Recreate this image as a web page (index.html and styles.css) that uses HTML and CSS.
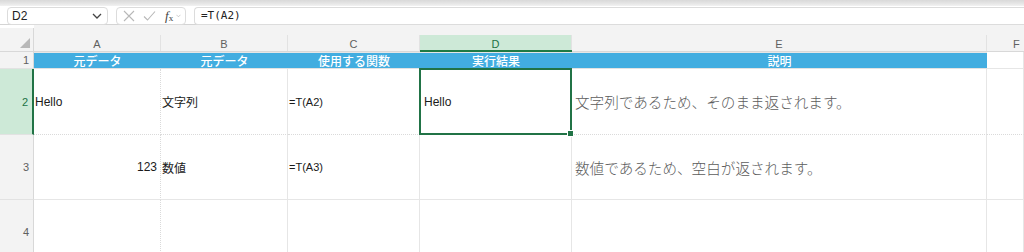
FILE: index.html
```html
<!DOCTYPE html>
<html lang="ja">
<head>
<meta charset="utf-8">
<link rel="stylesheet" href="styles.css">
</head>
<body>
<div class="app">
  <div class="topstrip"></div>
  <div class="formula-row">
    <div class="namebox">
      <span class="nb-text">D2</span>
      <svg class="chev" width="10" height="6" viewBox="0 0 10 6"><path d="M1 1 L5 5 L9 1" fill="none" stroke="#444" stroke-width="1.3"/></svg>
    </div>
    <div class="fxbox">
      <svg class="ic" width="12" height="12" viewBox="0 0 12 12"><path d="M1 1 L11 11 M11 1 L1 11" stroke="#b8b8b8" stroke-width="1.1" fill="none"/></svg>
      <svg class="ic" width="13" height="12" viewBox="0 0 13 12"><path d="M1 6.5 L4.5 10 L12 1.5" stroke="#b8b8b8" stroke-width="1.1" fill="none"/></svg>
      <span class="fx"><i>f</i><sub>x</sub></span>
      <svg class="chev-s" width="6" height="4" viewBox="0 0 6 4"><path d="M0.5 0.5 L3 3 L5.5 0.5" fill="none" stroke="#bbb" stroke-width="0.9"/></svg>
    </div>
    <div class="formula">=T(A2)</div>
  </div>
  <div class="sheet">
    <div class="corner"><span class="tri"></span></div>
    <div class="colh"><span>A</span></div>
    <div class="colh"><span>B</span></div>
    <div class="colh"><span>C</span></div>
    <div class="colh sel"><span>D</span></div>
    <div class="colh"><span>E</span></div>
    <div class="colh last"><span>F</span></div>

    <div class="rowh">1</div>
    <div class="hd">元データ</div>
    <div class="hd">元データ</div>
    <div class="hd">使用する関数</div>
    <div class="hd">実行結果</div>
    <div class="hd">説明</div>
    <div class="c blank"></div>

    <div class="rowh rsel">2</div>
    <div class="c dot vdot">Hello</div>
    <div class="c dot jp">文字列</div>
    <div class="c dot f">=T(A2)</div>
    <div class="c dot active">Hello</div>
    <div class="c dot desc">文字列であるため、そのまま返されます。</div>
    <div class="c dot"></div>

    <div class="rowh">3</div>
    <div class="c num vdot">123</div>
    <div class="c jp">数値</div>
    <div class="c f">=T(A3)</div>
    <div class="c"></div>
    <div class="c desc">数値であるため、空白が返されます。</div>
    <div class="c"></div>

    <div class="rowh">4</div>
    <div class="c vdot"></div>
    <div class="c"></div>
    <div class="c"></div>
    <div class="c"></div>
    <div class="c"></div>
    <div class="c"></div>
  </div>
</div>
</body>
</html>
```

FILE: styles.css
```css
* { box-sizing: border-box; }
html, body { margin: 0; padding: 0; background: #fff; }
body {
  font-family: "Liberation Sans", "Noto Sans CJK JP", sans-serif;
  width: 1024px;
  height: 252px;
  overflow: hidden;
}
.app { display: flex; flex-direction: column; }
.topstrip {
  height: 6px;
  background: linear-gradient(#d9d9d9, #e6e6e6 60%, #f2f2f2);
}
.formula-row {
  height: 19px;
  display: flex;
  align-items: flex-start;
  gap: 8px;
  padding: 1px 0 0 7px;
  border-bottom: 1px solid #d4d4d4;
  background: #fff;
}
.namebox {
  width: 101px;
  height: 18px;
  border: 1px solid #dcdcdc;
  border-radius: 4px;
  display: flex;
  align-items: center;
  justify-content: space-between;
  padding: 0 5px 0 4px;
  font-size: 12px;
  color: #222;
}
.fxbox {
  width: 70px;
  height: 18px;
  border: 1px solid #dcdcdc;
  border-radius: 4px;
  display: flex;
  align-items: center;
  padding: 0 4px 0 6px;
  gap: 8px;
}
.fxbox .ic { flex: none; }
.fx {
  font-family: "Liberation Serif", serif;
  font-size: 13px;
  color: #444;
  margin-left: 1px;
}
.fx sub { font-size: 9px; font-style: normal; vertical-align: -1px; }
.chev-s { margin-left: -5px; }
.formula {
  flex: 1;
  height: 18px;
  border: 1px solid #dcdcdc;
  border-right: none;
  border-radius: 4px 0 0 4px;
  padding: 1px 0 0 6px;
  font-family: "DejaVu Sans Mono", monospace;
  font-size: 11px;
  color: #222;
}
.sheet {
  display: grid;
  grid-template-columns: 34px 127px 127px 132px 152px 415px 1fr;
  grid-template-rows: 27px 17px 66px 65px 65px;
  background: #fff;
}
.corner {
  background: #f3f3f3;
  position: relative;
  border-right: 1px solid #d8d8d8;
  border-bottom: 1px solid #d8d8d8;
  margin-top: 3px;
}
.tri {
  position: absolute;
  right: 3px;
  bottom: 3px;
  width: 0;
  height: 0;
  border-left: 10px solid transparent;
  border-bottom: 10px solid #b8b8b8;
}
.colh {
  background: #f3f3f3;
  display: flex;
  align-items: flex-end;
  border-bottom: 1px solid #d8d8d8;
}
.colh span {
  flex: 1;
  height: 16px;
  border-right: 1px solid #e2e2e2;
  display: flex;
  align-items: center;
  justify-content: center;
  padding-top: 2px;
  font-size: 11px;
  color: #606060;
}
.colh.last span { border-right: none; justify-content: flex-start; padding-left: 26px; }
.colh.sel { border-bottom: 2px solid #1f7a45; }
.colh.sel span { background: #cde9d7; color: #217346; height: 15px; }
.rowh {
  background: #f3f3f3;
  border-right: 1px solid #d8d8d8;
  border-bottom: 1px solid #e2e2e2;
  display: flex;
  align-items: center;
  justify-content: flex-end;
  padding-right: 4px;
  font-size: 11px;
  color: #606060;
}
.rowh.rsel {
  background: #cde9d7;
  color: #217346;
  border-right: 2px solid #217346;
}
.hd {
  background: #42ade0;
  color: #fff;
  font-family: "Noto Sans CJK JP", sans-serif;
  font-size: 12px;
  font-weight: 500;
  display: flex;
  align-items: center;
  justify-content: center;
  border-top: 1px solid #e6e6e6;
  border-bottom: 1px solid #e2e2e2;
}
.c {
  border-right: 1px solid #e6e6e6;
  border-bottom: 1px solid #e6e6e6;
  display: flex;
  align-items: center;
  padding-left: 1px;
  font-size: 12px;
  color: #1a1a1a;
  white-space: nowrap;
}
.c.blank { border-bottom: 1px solid #e6e6e6; }
.c.dot { border-bottom: 1px dotted #dadada; }
.c.vdot { border-right: 1px dotted #dadada; }
.c.jp { font-family: "Noto Sans CJK JP", sans-serif; font-size: 12px; }
.c.f { font-size: 11px; }
.c.num { justify-content: flex-end; padding-right: 3px; }
.c.desc {
  font-family: "Noto Sans CJK JP", sans-serif;
  font-size: 14.6px;
  font-weight: 300;
  color: #5c5c5c;
  padding-left: 3px;
}
.c.active { position: relative; padding-left: 4px; }
.c.active::after {
  content: "";
  position: absolute;
  left: -1px;
  top: -1px;
  right: -1px;
  bottom: -1px;
  border: 2px solid #217346;
}
.c.active::before {
  content: "";
  position: absolute;
  right: -3px;
  bottom: -3px;
  width: 5px;
  height: 5px;
  background: #217346;
  border: 1px solid #fff;
  z-index: 1;
}
```
